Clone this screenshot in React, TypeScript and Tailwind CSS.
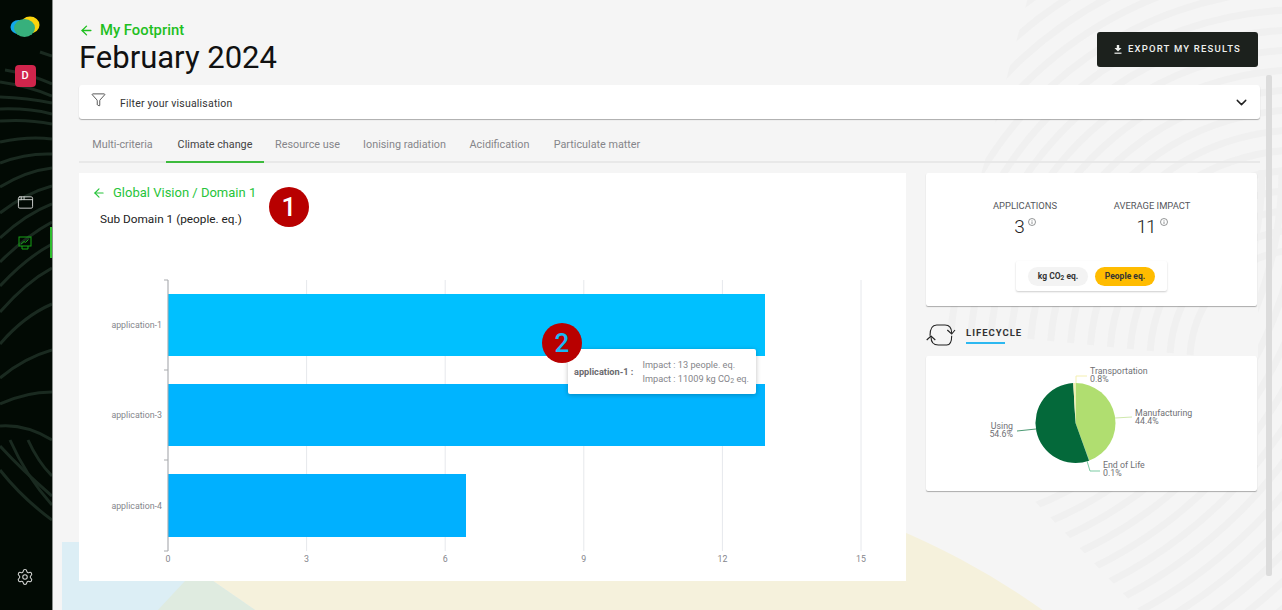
import { ArrowLeft, AppWindow, ChevronDown, Filter, Settings } from "lucide-react";

const FONT = "font-['Roboto',sans-serif]";

const tabs = [
  { label: "Multi-criteria", width: "w-[87px]" },
  { label: "Climate change", width: "w-[98px]", active: true },
  { label: "Resource use", width: "w-[87px]" },
  { label: "Ionising radiation", width: "w-[107px]" },
  { label: "Acidification", width: "w-[83px]" },
  { label: "Particulate matter", width: "w-[112px]" },
];

const bars = [
  { name: "application-1", y: 294, h: 62, end: 765, color: "#00c0ff" },
  { name: "application-3", y: 384, h: 62, end: 765, color: "#00b4ff" },
  { name: "application-4", y: 474, h: 63, end: 466, color: "#00b0ff" },
];

const xTicks = [0, 3, 6, 9, 12, 15];
const xScale = (v: number) => 168 + (v * (861 - 168)) / 15;

// arcs of the fingerprint in the page background
function arc(cx: number, cy: number, r: number, from: number, to: number) {
  const a = (from * Math.PI) / 180;
  const b = (to * Math.PI) / 180;
  return `M${cx + r * Math.cos(a)} ${cy + r * Math.sin(a)} A${r} ${r} 0 0 1 ${cx + r * Math.cos(b)} ${cy + r * Math.sin(b)}`;
}

function slice(cx: number, cy: number, r: number, start: number, end: number) {
  const p = (deg: number) => {
    const t = ((deg - 90) * Math.PI) / 180;
    return `${cx + r * Math.cos(t)} ${cy + r * Math.sin(t)}`;
  };
  return `M${cx} ${cy} L${p(start)} A${r} ${r} 0 ${end - start > 180 ? 1 : 0} 1 ${p(end)} Z`;
}

function PageBackground() {
  const top = Array.from({ length: 18 }, (_, i) => 110 + i * 20);
  const bottom = Array.from({ length: 16 }, (_, i) => 362 + i * 20);
  return (
    <svg className="absolute inset-0 h-[610px] w-[1282px]" viewBox="0 0 1282 610" fill="none">
      <defs>
        <clipPath id="fpTop">
          <polygon points="1030,-10 1282,-10 1282,360 1240,360 940,330" />
        </clipPath>
        <clipPath id="fpBottom">
          <polygon points="1000,465 1160,632 1282,632 1282,170 1258,170 1258,465" />
        </clipPath>
      </defs>
      <circle cx="600" cy="1234" r="765" fill="#f5f1dc" />
      <path d="M62 542 H160 L213 581 L255 610 H62 Z" fill="#dceef5" />
      <polygon points="185,581 213,581 255,610 158,610" fill="#dfebe0" />
      <g clipPath="url(#fpTop)" stroke="#f0f0f0" strokeWidth="7">
        {top.map((r) => (
          <path key={r} d={arc(1300, 360, r, 170, 285)} />
        ))}
      </g>
      <g clipPath="url(#fpBottom)" stroke="#f0f0f0" strokeWidth="7">
        {bottom.map((r) => (
          <path key={r} d={arc(900, 170, r, 0, 90)} />
        ))}
      </g>
    </svg>
  );
}

function Sidebar() {
  return (
    <aside className="relative flex h-full w-[53px] shrink-0 flex-col items-center border-r border-[#8a8f8c] bg-[#020a04] pr-[2px]">
      <svg className="absolute inset-0 h-full w-full" viewBox="0 0 52 610" fill="none" stroke="#1a2a20" strokeWidth="3">
        <path d="M40 52 Q46 54 52 56" />
        <path d="M5 70 Q30 74 52 84" />
        <path d="M0 82 Q28 86 52 96" />
        <path d="M0 97 Q28 98 52 103" />
        <path d="M0 109 Q28 108 52 114" />
        <path d="M0 121 Q28 119 52 124" />
        <path d="M0 142 Q28 136 52 139" />
        <path d="M0 163 Q26 153 52 154" />
        <path d="M0 187 Q26 171 52 168" />
        <path d="M0 213 Q26 193 52 186" />
        <path d="M0 238 Q26 214 52 204" />
        <path d="M0 262 Q26 236 52 222" />
        <path d="M0 286 Q26 258 52 244" />
        <path d="M0 312 Q26 282 52 268" />
        <path d="M0 344 Q24 316 52 304" />
        <path d="M0 378 Q24 358 52 350" />
        <path d="M0 404 Q26 392 52 392" />
        <path d="M0 426 Q26 424 52 440" />
        <path d="M0 446 Q22 470 52 496" />
        <path d="M10 440 Q26 476 52 505" />
        <path d="M0 470 Q22 498 52 520" />
        <path d="M28 440 Q38 462 52 476" />
      </svg>

      <svg className="relative mt-[16px] h-[22px] w-[30px]" viewBox="0 0 30 22">
        <ellipse cx="8.5" cy="11" rx="8" ry="7" fill="#10a8ee" />
        <ellipse cx="20" cy="9" rx="9.5" ry="8.5" fill="#fbd40c" />
        <ellipse cx="14.5" cy="12" rx="10.5" ry="9" fill="#37b07c" />
      </svg>

      <div className="relative mt-[27px] flex h-[22px] w-[21px] items-center justify-center rounded-[4px] bg-[#d0254c] text-[11px] font-medium text-white">
        D
      </div>

      <AppWindow className="relative mt-[107px]" size={17} color="#c9cbc9" strokeWidth={1.4} />

      <div className="relative mt-[16px] flex h-[31px] w-full items-center justify-center">
        <svg className="h-[14px] w-[14px]" viewBox="0 0 14 14" fill="none" stroke="#16a316" strokeWidth="1">
          <rect x="1" y="1" width="12" height="9" />
          <path d="M3 8 L6 5.5 L7.5 6.5 L10.5 3.5" />
          <path d="M4 10 V13 H10 V10" />
        </svg>
        <span className="absolute -right-[2px] top-0 h-full w-[2px] bg-[#2dbd2d]" />
      </div>

      <Settings className="relative mt-auto mb-[24px]" size={18} color="#d4d6d4" strokeWidth={1.4} />
    </aside>
  );
}

function BarChart() {
  return (
    <svg className="block h-[310px] w-[827px]" viewBox="79 270 827 310" fontFamily="Roboto, sans-serif">
      {xTicks.map((t) => (
        <line key={t} x1={xScale(t)} x2={xScale(t)} y1={280} y2={551} stroke="#e6e8ec" />
      ))}
      {bars.map((b) => (
        <g key={b.name}>
          <rect x={168} y={b.y} width={b.end - 168} height={b.h} fill={b.color} />
          <text x={162} y={b.y + b.h / 2 + 3} textAnchor="end" fontSize="8.8" fill="#85868c">
            {b.name}
          </text>
        </g>
      ))}
      <path d="M164 280 H168 V551 H164 M164 370 H168 M164 460 H168" fill="none" stroke="#a9abae" />
      {xTicks.map((t) => (
        <text key={t} x={xScale(t)} y={562} textAnchor="middle" fontSize="8.8" fill="#85868c">
          {t}
        </text>
      ))}
    </svg>
  );
}

function Pie() {
  const m = 159.84;
  const e = m + 0.36;
  const u = e + 196.56;
  return (
    <svg className="block h-[135px] w-[331px]" viewBox="926 356 331 135" fontFamily="Roboto, sans-serif" fontSize="8.8" fill="#6f7074">
      <path d={slice(1075.5, 423, 40, 0, m)} fill="#b0de70" />
      <path d={slice(1075.5, 423, 40, m, e)} fill="#5fbf8a" />
      <path d={slice(1075.5, 423, 40, e, u)} fill="#04693a" />
      <path d={slice(1075.5, 423, 40, u, 360)} fill="#f4efb0" />
      <path d="M1076 383 V376 H1087" fill="none" stroke="#f4efb0" />
      <path d="M1115 418 L1132 417" fill="none" stroke="#cfe8ad" />
      <path d="M1036 429 L1017 431" fill="none" stroke="#4c9a74" />
      <path d="M1087 461 L1090 471 H1100" fill="none" stroke="#7ccba3" />
      <text x={1090} y={374}>Transportation</text>
      <text x={1090} y={382}>0.8%</text>
      <text x={1135} y={416}>Manufacturing</text>
      <text x={1135} y={424}>44.4%</text>
      <text x={1013} y={429} textAnchor="end">Using</text>
      <text x={1013} y={437} textAnchor="end">54.6%</text>
      <text x={1103} y={468}>End of Life</text>
      <text x={1103} y={476}>0.1%</text>
    </svg>
  );
}

function InfoDot() {
  return (
    <svg className="mt-[2px] h-[8px] w-[8px]" viewBox="0 0 8 8" fill="none" stroke="#66686c" strokeWidth="0.7">
      <circle cx="4" cy="4" r="3.5" />
      <path d="M4 3.4 V6 M4 2 V2.7" />
    </svg>
  );
}

function Stat({ label, value, width }: { label: string; value: string; width: string }) {
  return (
    <div className={`flex flex-col items-center ${width}`}>
      <span className="text-[9.4px] leading-[12px] text-[#55565c]">{label}</span>
      <div className="mt-[4px] flex items-start gap-[4px]">
        <span className="text-[19px] leading-[22px] font-light tracking-[-1px] text-[#222]">{value}</span>
        <InfoDot />
      </div>
    </div>
  );
}

function Badge({ n, className }: { n: string; className: string }) {
  return (
    <div className={`absolute flex h-[40px] w-[40px] items-center justify-center rounded-full bg-[#b80000] text-[26px] font-medium ${className}`}>
      {n}
    </div>
  );
}

export default function App() {
  return (
    <div className={`relative flex h-[610px] w-[1282px] overflow-hidden bg-[#f5f5f5] ${FONT}`}>
      <PageBackground />
      <Sidebar />

      <main className="relative flex-1 pl-[26px] pr-[22px] pt-[21px]">
        {/* Header */}
        <div className="flex items-start justify-between">
          <div>
            <div className="flex h-[18px] items-center text-[14.8px] font-medium text-[#1fbf1f]">
              <ArrowLeft size={15} strokeWidth={2.2} />
              <span className="ml-[6px]">My Footprint</span>
            </div>
            <h1 className="mt-[1px] text-[31px] leading-[36px] text-[#111]">February 2024</h1>
          </div>
          <button className="mt-[11px] mr-[2px] flex h-[35px] w-[161px] items-center justify-center gap-[6px] rounded-[3px] bg-[#1c211d] text-[9.5px] font-medium tracking-[1.2px] text-[#eef0ee]">
            <svg className="h-[9px] w-[8px]" viewBox="0 0 8 9" fill="#eef0ee">
              <path d="M2.8 0 H5.2 V3 H7.5 L4 6.4 L0.5 3 H2.8 Z" />
              <rect x="0.5" y="7.6" width="7" height="1.2" />
            </svg>
            EXPORT MY RESULTS
          </button>
        </div>

        {/* Filter */}
        <div className="mt-[9px] flex h-[34px] items-center rounded-[3px] bg-white pl-[12px] pr-[10px] shadow-[0_1px_1px_rgba(0,0,0,0.3)]">
          <Filter size={15} strokeWidth={1.2} className="mb-[5px] text-[#222]" />
          <span className="ml-[14px] mt-[4px] text-[10.5px] tracking-[0.2px] text-[#333]">Filter your visualisation</span>
          <ChevronDown size={17} strokeWidth={2} className="ml-auto text-[#222]" />
        </div>

        {/* Tabs */}
        <div className="mt-[11px] flex h-[33px] border-b-2 border-[#e8e8e8]">
          {tabs.map((t) => (
            <div
              key={t.label}
              className={`flex h-[33px] items-center justify-center text-[10.8px] ${t.width} ${
                t.active ? "border-b-2 border-[#3dbb3d] pb-[1px] text-[#444]" : "pb-[3px] text-[#85858a]"
              }`}
            >
              {t.label}
            </div>
          ))}
        </div>

        <div className="mt-[10px] flex items-start">
          {/* Left card */}
          <section className="relative h-[408px] w-[827px] bg-white">
            <div className="flex h-[20px] items-center pl-[13px] mt-[10px] text-[13px] text-[#27c43a] pt-0">
              <ArrowLeft size={14} />
              <span className="ml-[7px]">Global Vision / Domain 1</span>
            </div>
            <p className="mt-[8px] pl-[21px] text-[11.8px] leading-[16px] text-[#222]">Sub Domain 1 (people. eq.)</p>
            <div className="mt-[43px]">
              <BarChart />
            </div>

            <div className="absolute left-[489px] top-[176px] flex h-[45px] w-[188px] items-center rounded-[2px] bg-white pl-[6px] text-[9.2px] text-[#85858a] shadow-[0_1px_5px_rgba(0,0,0,0.25)]">
              <span className="font-bold text-[#6a6a6e]">application-1 :</span>
              <div className="ml-[9px] leading-[13.5px]">
                <div>Impact : 13 people. eq.</div>
                <div>
                  Impact : 11009 kg CO<sub className="text-[7px]">2</sub> eq.
                </div>
              </div>
            </div>

            <Badge n="1" className="left-[190px] top-[14px] text-white" />
            <Badge n="2" className="left-[463px] top-[150px] text-[#18b8f5]" />
          </section>

          {/* Right column */}
          <div className="ml-[20px] w-[331px]">
            <section className="flex h-[133px] flex-col items-center rounded-[2px] bg-white pt-[27px] shadow-[0_1px_1px_rgba(0,0,0,0.3)]">
              <div className="flex pr-[6px]">
                <Stat label="APPLICATIONS" value="3" width="w-[127px]" />
                <Stat label="AVERAGE IMPACT" value="11" width="w-[127px]" />
              </div>
              <div className="mt-[23px] flex h-[30px] w-[151px] items-center justify-center gap-[7px] rounded-[2px] bg-white text-[8.5px] font-bold text-[#333] shadow-[0_1px_2px_rgba(0,0,0,0.2)]">
                <span className="flex h-[19px] w-[60px] items-center justify-center rounded-full bg-[#f3f3f3]">
                  kg CO<sub className="text-[6.5px]">2</sub>&nbsp;eq.
                </span>
                <span className="flex h-[19px] w-[60px] items-center justify-center rounded-full bg-[#ffbc00]">People eq.</span>
              </div>
            </section>

            <div className="flex h-[50px] items-center">
              <svg className="mt-[8px] h-[24px] w-[30px]" viewBox="0 0 30 24" fill="none" stroke="#222" strokeWidth="1.1">
                <path d="M4 12.7 Q4 2 10.7 2 H19 Q25.7 2 25.7 10.3" />
                <path d="M21.3 7 L25.7 11 L29 7" />
                <path d="M25.7 12.7 Q25.7 22 20.7 22 H12.3 Q5 22 5 13.7" />
                <path d="M0.7 17 L5 13 L9.3 17" />
              </svg>
              <div className="ml-[10px] flex flex-col pt-[9px]">
                <span className="text-[9.5px] leading-[12px] font-bold tracking-[1px] text-[#333]">LIFECYCLE</span>
                <span className="mt-[3px] h-[2px] w-[39px] shrink-0 bg-[#2db8f0]" />
              </div>
            </div>

            <section className="h-[135px] rounded-[2px] bg-white shadow-[0_1px_1px_rgba(0,0,0,0.3)]">
              <Pie />
            </section>
          </div>
        </div>

        {/* Scrollbar */}
        <div className="absolute right-[10px] top-[75px] h-[501px] w-[6px] rounded-[2px] bg-[#dcdcdc]" />
      </main>
    </div>
  );
}
